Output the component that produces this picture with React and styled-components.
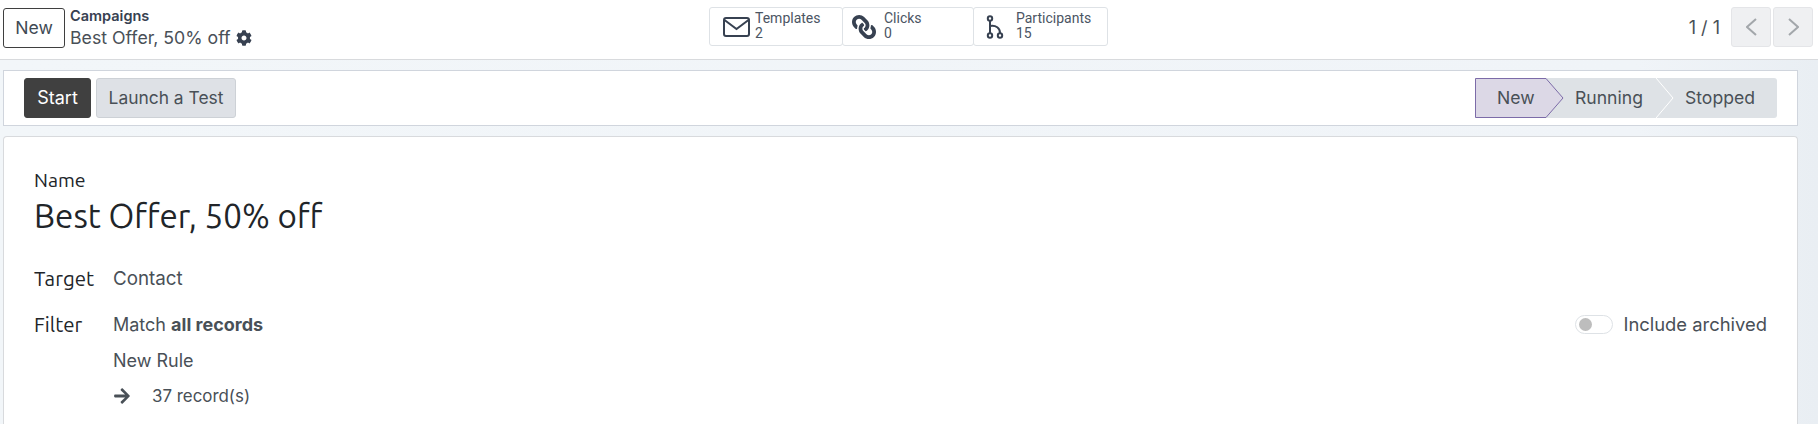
import React from 'react';
import styled, { createGlobalStyle } from 'styled-components';
import { FaCog, FaLink, FaArrowRight } from 'react-icons/fa';

const Global = createGlobalStyle`
  html, body { margin: 0; padding: 0; height: 100%; overflow: hidden; }
  body { font-family: Inter, Roboto, sans-serif; color: #495057; background: #fff; }
`;

const Page = styled.div`
  width: 1818px;
  height: 424px;
  display: flex;
  flex-direction: column;
  overflow: hidden;
  font-size: 17.6px;
`;

const TopBar = styled.div`
  height: 60px;
  flex: none;
  box-sizing: border-box;
  display: grid;
  grid-template-columns: 1fr auto 1fr;
  align-items: flex-start;
  padding: 7px 5px 0 3px;
  background: #fff;
  border-bottom: 1px solid #d8dadd;
`;

const TopLeft = styled.div`
  display: flex;
  gap: 5px;
`;

const NewButton = styled.button`
  width: 62px;
  height: 40px;
  margin-top: 1px;
  background: #fff;
  border: 1px solid #3f3f3f;
  border-radius: 3px;
  font: 17.6px Inter, sans-serif;
  color: #3f4a54;
  padding: 0 0 2px;
`;

const Crumbs = styled.div`
  display: flex;
  flex-direction: column;
  padding-top: 1px;
`;

const CrumbParent = styled.div`
  font-size: 14.5px;
  font-weight: 600;
  line-height: 16px;
  color: #374151;
`;

const CrumbCurrent = styled.div`
  display: flex;
  align-items: center;
  gap: 5px;
  font-size: 17.7px;
  line-height: 22px;
  margin-top: 3px;
`;

const Stats = styled.div`
  display: flex;
`;

const Stat = styled.div`
  width: ${p => p.$w}px;
  height: 39px;
  display: flex;
  align-items: center;
  gap: ${p => p.$gap}px;
  padding-left: ${p => p.$pad}px;
  box-sizing: border-box;
  border: 1px solid #dee2e6;
  border-radius: 3px;
  background: #fff;
  margin-right: -1px;
`;

const StatText = styled.div`
  font-family: Roboto, sans-serif;
  font-size: 14px;
  line-height: 15px;
  color: #4b5563;
  margin-top: -2px;
`;

const Pager = styled.div`
  display: flex;
  justify-content: flex-end;
  align-items: center;
  gap: 2px;
`;

const PagerText = styled.span`
  font-size: 18px;
  margin-right: 9px;
`;

const PagerButton = styled.div`
  width: 40px;
  height: 40px;
  display: flex;
  align-items: center;
  justify-content: center;
  background: #eff0f2;
  border: 1px solid #e4e5e8;
  border-radius: 3px;
  box-sizing: border-box;
`;

const Content = styled.div`
  flex: 1;
  background: linear-gradient(90deg, #f2f6f9, #f0f4f8 90%, #e9eef3);
  padding: 10px 20px 0 3px;
  display: flex;
  flex-direction: column;
  gap: 10px;
`;

const StatusBar = styled.div`
  height: 56px;
  flex: none;
  box-sizing: border-box;
  display: flex;
  justify-content: space-between;
  align-items: center;
  padding: 0 20px;
  background: #fff;
  border: 1px solid #d0d5dd;
`;

const Actions = styled.div`
  display: flex;
  gap: 5px;
`;

const ActionButton = styled.button`
  height: 40px;
  width: ${p => p.$w}px;
  padding: 0 0 2px;
  border: 1px solid ${p => (p.$primary ? '#404040' : '#cdd1d6')};
  border-radius: 3px;
  background: ${p => (p.$primary ? '#404040' : '#dee1e6')};
  color: ${p => (p.$primary ? '#fff' : '#495057')};
  font: ${p => (p.$primary ? 18 : 17.4)}px Inter, sans-serif;
`;

const Steps = styled.div`
  display: flex;
  height: 40px;
  background: #dee2e6;
  border-radius: 3px;
`;

const Step = styled.div`
  position: relative;
  width: ${p => p.$w}px;
  padding: 0 0 2px ${p => p.$pad}px;
  display: flex;
  align-items: center;
  box-sizing: border-box;
  color: #495057;
`;

const StepShape = styled.svg`
  position: absolute;
  left: 0;
  top: 0;
`;

const StepLabel = styled.span`
  position: relative;
`;

const Sheet = styled.div`
  flex: 1;
  background: #fff;
  border: 1px solid #d8dadd;
  border-bottom: none;
  border-radius: 4px 4px 0 0;
  padding: 32px 30px 0;
  display: flex;
  flex-direction: column;
  color: #212529;
`;

const FieldLabel = styled.div`
  font-family: Ubuntu, "Noto Sans", sans-serif;
  font-size: 19.5px;
  line-height: 22px;
`;

const Title = styled.div`
  font-family: Ubuntu, "Noto Sans", sans-serif;
  font-size: 33.2px;
  line-height: 40px;
  margin-top: 5px;
`;

const Row = styled.div`
  display: grid;
  grid-template-columns: 79px 1fr;
  margin-top: ${p => p.$top}px;
`;

const Label = styled.div`
  font-family: Ubuntu, "Noto Sans", sans-serif;
  font-size: 20.5px;
  line-height: 22px;
`;

const Value = styled.div`
  line-height: 22px;
  color: #495057;
  font-size: ${p => p.$size || 18}px;
`;

const FilterBody = styled.div`
  display: flex;
  justify-content: space-between;
  align-items: flex-start;
`;

const FilterLines = styled.div`
  display: flex;
  flex-direction: column;
  gap: 13.5px;
`;

const Strong = styled.b`
  font-weight: 700;
`;

const Count = styled.div`
  display: flex;
  align-items: center;
  gap: 21px;
`;

const Toggle = styled.label`
  display: flex;
  align-items: center;
  gap: 10px;
  margin-top: -1px;
  color: #495057;
  font-size: 18.4px;
  line-height: 22px;
`;

const Switch = styled.span`
  width: 38px;
  height: 19px;
  box-sizing: border-box;
  border: 1px solid #dee2e6;
  border-radius: 10px;
  display: flex;
  align-items: center;
  padding-left: 3px;

  &::before {
    content: '';
    width: 13px;
    height: 13px;
    border-radius: 50%;
    background: #bdbdbd;
  }
`;

const FlippedLink = styled(FaLink)`
  transform: scaleX(-1);
`;

function Envelope() {
  return (
    <svg width="27" height="22" viewBox="0 0 27 22" fill="none" stroke="#374151" strokeWidth="2">
      <rect x="1" y="2" width="25" height="18" rx="2" />
      <path d="M1.5 4 L13.5 13 L25.5 4" />
    </svg>
  );
}

function Fork() {
  return (
    <svg width="18" height="24" viewBox="0 0 18 24" fill="none" stroke="#374151" strokeWidth="2">
      <circle cx="4" cy="3.5" r="2.2" />
      <circle cx="4" cy="20.5" r="2.2" />
      <circle cx="14" cy="20.5" r="2.2" />
      <path d="M4 6 V18 M4 11 C10 10 14 13 14 18" />
    </svg>
  );
}

function Chevron({ flip }) {
  return (
    <svg width="11" height="18" viewBox="0 0 11 18" fill="none" stroke="#a3a7ab" strokeWidth="2">
      <path d={flip ? 'M1 1 L10 9 L1 17' : 'M10 1 L1 9 L10 17'} />
    </svg>
  );
}

const statButtons = [
  { label: 'Templates', value: '2', w: 134, pad: 13, gap: 5, icon: <Envelope /> },
  { label: 'Clicks', value: '0', w: 132, pad: 9, gap: 8, icon: <FlippedLink size={24} color="#374151" /> },
  { label: 'Participants', value: '15', w: 135, pad: 12, gap: 12, icon: <Fork /> },
];

export default function App() {
  return (
    <Page>
      <Global />
      <TopBar>
        <TopLeft>
          <NewButton>New</NewButton>
          <Crumbs>
            <CrumbParent>Campaigns</CrumbParent>
            <CrumbCurrent>
              Best Offer, 50% off <FaCog size={16} color="#374151" />
            </CrumbCurrent>
          </Crumbs>
        </TopLeft>
        <Stats>
          {statButtons.map(({ label, value, w, pad, gap, icon }) => (
            <Stat key={label} $w={w} $pad={pad} $gap={gap}>
              {icon}
              <StatText>
                <div>{label}</div>
                <div>{value}</div>
              </StatText>
            </Stat>
          ))}
        </Stats>
        <Pager>
          <PagerText>1 / 1</PagerText>
          <PagerButton><Chevron /></PagerButton>
          <PagerButton><Chevron flip /></PagerButton>
        </Pager>
      </TopBar>
      <Content>
        <StatusBar>
          <Actions>
            <ActionButton $primary $w={67}>Start</ActionButton>
            <ActionButton $w={140}>Launch a Test</ActionButton>
          </Actions>
          <Steps>
            <Step $w={71} $pad={22}>
              <StepShape width="90" height="40" viewBox="0 0 90 40" fill="#dcd8e6" stroke="#7c6ba8">
                <path d="M0.5 0.5 H71 L88 20 L71 39.5 H0.5 Z" />
              </StepShape>
              <StepLabel>New</StepLabel>
            </Step>
            <Step $w={110} $pad={29}>
              <StepLabel>Running</StepLabel>
            </Step>
            <Step $w={121} $pad={29}>
              <StepShape width="20" height="40" viewBox="0 0 20 40" fill="none" stroke="#fff">
                <path d="M0 0 L17 20 L0 40" />
              </StepShape>
              <StepLabel>Stopped</StepLabel>
            </Step>
          </Steps>
        </StatusBar>
        <Sheet>
          <FieldLabel>Name</FieldLabel>
          <Title>Best Offer, 50% off</Title>
          <Row $top={32}>
            <Label>Target</Label>
            <Value $size={18.8}>Contact</Value>
          </Row>
          <Row $top={24}>
            <Label>Filter</Label>
            <FilterBody>
              <FilterLines>
                <Value>Match <Strong>all records</Strong></Value>
                <Value>New Rule</Value>
                <Count>
                  <FaArrowRight size={18} color="#495057" />
                  <Value $size={16.9}>37 record(s)</Value>
                </Count>
              </FilterLines>
              <Toggle><Switch />Include archived</Toggle>
            </FilterBody>
          </Row>
        </Sheet>
      </Content>
    </Page>
  );
}
